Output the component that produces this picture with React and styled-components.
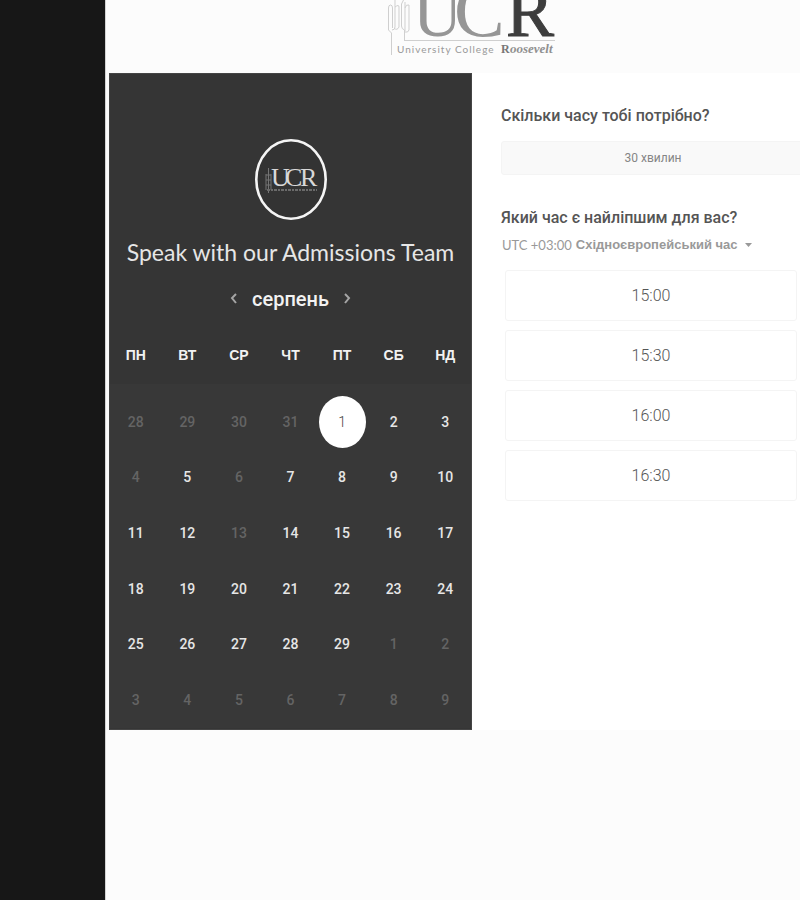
import React, { useState } from "react";
import styled, { createGlobalStyle } from "styled-components";

const GlobalStyle = createGlobalStyle`
  * { box-sizing: border-box; }
  body { margin: 0; background: #fcfcfc; font-family: "Liberation Sans", Arial, sans-serif; }
  button { border: 0; padding: 0; background: none; font: inherit; color: inherit; cursor: pointer; }
`;

const Page = styled.div`
  display: flex;
  min-height: 100vh;
  overflow: hidden;
`;

const SideStrip = styled.aside`
  flex: 0 0 105px;
  background: #171717;
`;

const Main = styled.main`
  flex: 1;
  min-width: 0;
  border-left: 1px solid #d4d4d4;
  padding-left: 3px;
`;

const Header = styled.header`
  height: 73px;
  padding-left: 276px;
`;

const HeaderLogo = styled.svg`
  display: block;
`;

const Booking = styled.div`
  display: grid;
  grid-template-columns: 363px minmax(0, 1fr);
`;

const CalendarPanel = styled.section`
  display: flex;
  flex-direction: column;
  align-items: center;
  padding: 65px 0 1px;
  border: 1px solid #454545;
  background: #353535;
  color: #f2f2f2;
`;

const Avatar = styled.svg`
  display: block;
`;

const Title = styled.h1`
  margin: 16px 0 0;
  font: 400 23px/32px Lato, sans-serif;
  white-space: nowrap;
  color: #e6e6e6;
`;

const MonthBar = styled.div`
  display: flex;
  align-items: center;
  gap: 13px;
  height: 32px;
  margin-top: 15px;
`;

const MonthName = styled.h2`
  margin: 0;
  font: 500 20px/32px Roboto, sans-serif;
`;

const ArrowButton = styled.button`
  display: flex;
  width: 10px;
  height: 16px;
  color: #a5a5a5;
`;

const Calendar = styled.table`
  display: block;
  width: 100%;
  margin-top: 24px;
`;

const WeekHead = styled.thead`
  display: block;
  height: 45px;
`;

const Weeks = styled.tbody`
  display: grid;
  grid-template-rows: repeat(6, 1fr);
  height: 344px;
  padding-top: 10px;
  background: #383838;
`;

const WeekRow = styled.tr`
  display: grid;
  grid-template-columns: repeat(7, 1fr);
  align-items: center;
`;

const Weekday = styled.th`
  padding: 0;
  font-size: 14px;
  line-height: 32px;
  font-weight: 700;
`;

const DayCell = styled.td`
  display: flex;
  justify-content: center;
  padding: 0;
`;

const Day = styled.button`
  width: 47px;
  height: 52px;
  border-radius: 50%;
  font: ${(p) => (p.$selected ? 300 : 500)} 14px/20px Roboto, sans-serif;
  color: ${(p) => (p.$selected ? "#444" : p.$muted ? "#646464" : "#e6e6e6")};
  background: ${(p) => (p.$selected ? "#fff" : "transparent")};
`;

const Options = styled.section`
  padding: 31px 0 0 29px;
  background: #fff;
`;

const Question = styled.h3`
  margin: 0;
  font: 500 16px/24px Roboto, sans-serif;
  color: #555;
`;

const Duration = styled.button`
  display: block;
  width: calc(100% + 5px);
  height: 34px;
  margin: 13px 0 31px;
  border: 1px solid #f4f4f4;
  border-radius: 3px;
  background: #f9f9f9;
  color: #858585;
  font: 400 12px/20px Roboto, sans-serif;
`;

const Zone = styled.button`
  display: flex;
  align-items: center;
  gap: 4px;
  height: 30px;
  padding-left: 1px;
  color: #999;
  white-space: nowrap;
`;

const Offset = styled.span`
  font: 400 13px/20px Lato, sans-serif;
`;

const ZoneName = styled.span`
  font-size: 13px;
  line-height: 20px;
  font-weight: 700;
`;

const Caret = styled.svg`
  margin-left: 3px;
`;

const Slots = styled.div`
  display: grid;
  gap: 9px;
  margin: 10px 3px 0 4px;
`;

const Slot = styled.button`
  height: 51px;
  border: 1px solid #f4f4f4;
  border-radius: 3px;
  background: #fff;
  color: #555;
  font: 300 16px/24px Roboto, sans-serif;
`;

const weekdays = ["ПН", "ВТ", "СР", "ЧТ", "ПТ", "СБ", "НД"];
const weeks = [
  [28, 29, 30, 31, 1, 2, 3],
  [4, 5, 6, 7, 8, 9, 10],
  [11, 12, 13, 14, 15, 16, 17],
  [18, 19, 20, 21, 22, 23, 24],
  [25, 26, 27, 28, 29, 1, 2],
  [3, 4, 5, 6, 7, 8, 9],
];
const unavailable = new Set([0, 1, 2, 3, 7, 9, 16, 33, 34, 35, 36, 37, 38, 39, 40, 41]);
const times = ["15:00", "15:30", "16:00", "16:30"];

function CollegeLogo() {
  return (
    <HeaderLogo width="180" height="60" viewBox="385 0 180 60" role="img" aria-label="University College Roosevelt">
      <g fill="none" stroke="#cfcfcf" strokeWidth="1">
        <path d="M391.500 55V33l-3-3V8q0-3 2-3t2 3v20M395 0v27q0 3-3 3M395 7q4-3 4 0v20q-2 4-5 1M404.500 40V30q-3-1-3-4V4l2-4M405 2v29M405 8q1-4 4-3v25q-1 3-4 2" />
        <path d="M404 40.500H555" />
      </g>
      <g fontFamily="Liberation Serif, serif">
        <text x="413" y="36" fontSize="68" fill="#969696">U</text>
        <text x="454" y="36" fontSize="76" fill="#969696">C</text>
        <text x="506" y="36" fontSize="72" fill="#3d3d3d" stroke="#3d3d3d">R</text>
        <text x="501" y="53" fontSize="12" fontWeight="700" fill="#777">R</text>
        <text x="510" y="53" fontSize="13" fontWeight="700" fontStyle="italic" fill="#909090">oosevelt</text>
      </g>
      <text x="397" y="53" fontFamily="Lato, sans-serif" fontSize="10" letterSpacing="1" fill="#999">University College</text>
    </HeaderLogo>
  );
}

function RoundLogo() {
  return (
    <Avatar width="72" height="81" viewBox="0 0 72 81" role="img" aria-label="UCR">
      <ellipse cx="36" cy="40.500" rx="34.700" ry="39.200" fill="#333" stroke="#f5f5f5" strokeWidth="2.600" />
      <g fill="none" stroke="#757575">
        <path d="M13.500 29v25M11 35v16M16 35v16M11 36h5M11 41h5M11 46h5" />
      </g>
      <g fontFamily="Liberation Serif, serif" fontSize="26" fill="#d8d8d8">
        <text x="16" y="47">U</text>
        <text x="30" y="47">C</text>
        <text x="45" y="47">R</text>
      </g>
      <path d="M12 51h50" stroke="#6a6a6a" strokeWidth="2" strokeDasharray="3 1 2 1" />
    </Avatar>
  );
}

function Chevron({ right = false }) {
  return (
    <svg width="10" height="16" viewBox="0 0 10 16" fill="none" stroke="currentColor" strokeWidth="2" aria-hidden="true">
      <path d={right ? "M3 3l4 4-4 5" : "M7 3L3 7l4 5"} />
    </svg>
  );
}

export default function App() {
  const [selected, setSelected] = useState(4);
  return (
    <Page>
      <GlobalStyle />
      <SideStrip />
      <Main>
        <Header><CollegeLogo /></Header>
        <Booking>
          <CalendarPanel>
            <RoundLogo />
            <Title>Speak with our Admissions Team</Title>
            <MonthBar>
              <ArrowButton aria-label="Попередній місяць"><Chevron /></ArrowButton>
              <MonthName>серпень</MonthName>
              <ArrowButton aria-label="Наступний місяць"><Chevron right /></ArrowButton>
            </MonthBar>
            <Calendar>
              <WeekHead>
                <WeekRow>
                  {weekdays.map((d) => <Weekday key={d} scope="col">{d}</Weekday>)}
                </WeekRow>
              </WeekHead>
              <Weeks>
                {weeks.map((week, w) => (
                  <WeekRow key={w}>
                    {week.map((d, i) => {
                      const index = w * 7 + i;
                      return (
                        <DayCell key={index}>
                          <Day
                            $selected={index === selected}
                            $muted={unavailable.has(index)}
                            disabled={unavailable.has(index)}
                            onClick={() => setSelected(index)}
                          >
                            {d}
                          </Day>
                        </DayCell>
                      );
                    })}
                  </WeekRow>
                ))}
              </Weeks>
            </Calendar>
          </CalendarPanel>
          <Options>
            <Question>Скільки часу тобі потрібно?</Question>
            <Duration>30 хвилин</Duration>
            <Question>Який час є найліпшим для вас?</Question>
            <Zone>
              <Offset>UTC +03:00</Offset>
              <ZoneName>Східноєвропейський час</ZoneName>
              <Caret width="7" height="4" viewBox="0 0 7 4" fill="currentColor" aria-hidden="true">
                <path d="M0 0h7L3.500 4z" />
              </Caret>
            </Zone>
            <Slots>
              {times.map((t) => <Slot key={t}>{t}</Slot>)}
            </Slots>
          </Options>
        </Booking>
      </Main>
    </Page>
  );
}
